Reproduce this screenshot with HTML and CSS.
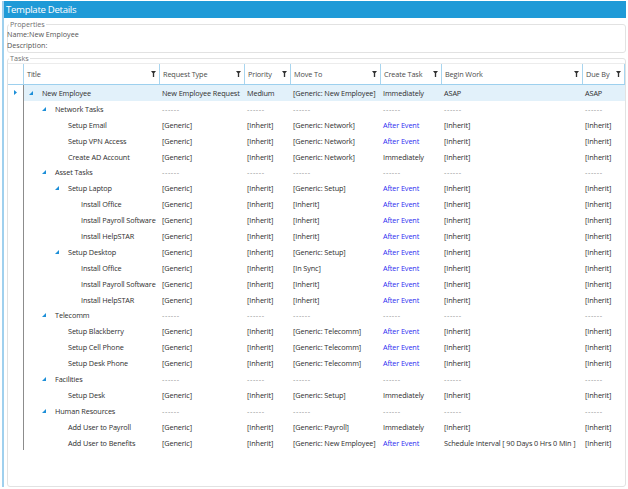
FILE: index.html
```html
<!DOCTYPE html>
<html>
<head>
<meta charset="utf-8">
<link rel="stylesheet" href="styles.css">
</head>
<body>
<div class="window">
  <div class="titlebar">Template Details</div>
  <fieldset class="group props">
    <legend>Properties</legend>
    <div class="prop">Name:New Employee</div>
    <div class="prop">Description:</div>
  </fieldset>
  <fieldset class="group tasks">
    <legend>Tasks</legend>
    <div class="grid">
      <div class="row head">
        <div class="c ind"></div>
        <div class="c h">Title<svg class="flt" viewBox="0 0 6 7"><path d="M0 0H6L3.8 2.6V7H2.2V2.6Z"/></svg></div>
        <div class="c h">Request Type<svg class="flt" viewBox="0 0 6 7"><path d="M0 0H6L3.8 2.6V7H2.2V2.6Z"/></svg></div>
        <div class="c h">Priority<svg class="flt" viewBox="0 0 6 7"><path d="M0 0H6L3.8 2.6V7H2.2V2.6Z"/></svg></div>
        <div class="c h">Move To<svg class="flt" viewBox="0 0 6 7"><path d="M0 0H6L3.8 2.6V7H2.2V2.6Z"/></svg></div>
        <div class="c h">Create Task<svg class="flt" viewBox="0 0 6 7"><path d="M0 0H6L3.8 2.6V7H2.2V2.6Z"/></svg></div>
        <div class="c h">Begin Work<svg class="flt" viewBox="0 0 6 7"><path d="M0 0H6L3.8 2.6V7H2.2V2.6Z"/></svg></div>
        <div class="c h last">Due By<svg class="flt" viewBox="0 0 6 7"><path d="M0 0H6L3.8 2.6V7H2.2V2.6Z"/></svg></div>
      </div>

      <div class="row sel">
        <div class="c ind"><svg class="cur" viewBox="0 0 3 5"><path d="M0 0L3 2.5L0 5Z"/></svg></div>
        <div class="c t l0"><svg class="tg" viewBox="0 0 5 5"><path d="M5 0V5H0Z"/></svg>New Employee</div>
        <div class="c">New Employee Request</div><div class="c">Medium</div><div class="c">[Generic: New Employee]</div><div class="c">Immediately</div><div class="c">ASAP</div><div class="c">ASAP</div>
      </div>

      <div class="row">
        <div class="c ind"></div>
        <div class="c t l1"><svg class="tg" viewBox="0 0 5 5"><path d="M5 0V5H0Z"/></svg>Network Tasks</div>
        <div class="c d">------</div><div class="c d">------</div><div class="c d">------</div><div class="c d">------</div><div class="c d">------</div><div class="c d">------</div>
      </div>
      <div class="row">
        <div class="c ind"></div>
        <div class="c t l2"><span class="sp"></span>Setup Email</div>
        <div class="c">[Generic]</div><div class="c">[Inherit]</div><div class="c">[Generic: Network]</div><div class="c ev">After Event</div><div class="c">[Inherit]</div><div class="c">[Inherit]</div>
      </div>
      <div class="row">
        <div class="c ind"></div>
        <div class="c t l2"><span class="sp"></span>Setup VPN Access</div>
        <div class="c">[Generic]</div><div class="c">[Inherit]</div><div class="c">[Generic: Network]</div><div class="c ev">After Event</div><div class="c">[Inherit]</div><div class="c">[Inherit]</div>
      </div>
      <div class="row">
        <div class="c ind"></div>
        <div class="c t l2"><span class="sp"></span>Create AD Account</div>
        <div class="c">[Generic]</div><div class="c">[Inherit]</div><div class="c">[Generic: Network]</div><div class="c">Immediately</div><div class="c">[Inherit]</div><div class="c">[Inherit]</div>
      </div>

      <div class="row">
        <div class="c ind"></div>
        <div class="c t l1"><svg class="tg" viewBox="0 0 5 5"><path d="M5 0V5H0Z"/></svg>Asset Tasks</div>
        <div class="c d">------</div><div class="c d">------</div><div class="c d">------</div><div class="c d">------</div><div class="c d">------</div><div class="c d">------</div>
      </div>
      <div class="row">
        <div class="c ind"></div>
        <div class="c t l2"><svg class="tg" viewBox="0 0 5 5"><path d="M5 0V5H0Z"/></svg>Setup Laptop</div>
        <div class="c">[Generic]</div><div class="c">[Inherit]</div><div class="c">[Generic: Setup]</div><div class="c ev">After Event</div><div class="c">[Inherit]</div><div class="c">[Inherit]</div>
      </div>
      <div class="row">
        <div class="c ind"></div>
        <div class="c t l3"><span class="sp"></span>Install Office</div>
        <div class="c">[Generic]</div><div class="c">[Inherit]</div><div class="c">[Inherit]</div><div class="c ev">After Event</div><div class="c">[Inherit]</div><div class="c">[Inherit]</div>
      </div>
      <div class="row">
        <div class="c ind"></div>
        <div class="c t l3"><span class="sp"></span>Install Payroll Software</div>
        <div class="c">[Generic]</div><div class="c">[Inherit]</div><div class="c">[Inherit]</div><div class="c ev">After Event</div><div class="c">[Inherit]</div><div class="c">[Inherit]</div>
      </div>
      <div class="row">
        <div class="c ind"></div>
        <div class="c t l3"><span class="sp"></span>Install HelpSTAR</div>
        <div class="c">[Generic]</div><div class="c">[Inherit]</div><div class="c">[Inherit]</div><div class="c ev">After Event</div><div class="c">[Inherit]</div><div class="c">[Inherit]</div>
      </div>
      <div class="row">
        <div class="c ind"></div>
        <div class="c t l2"><svg class="tg" viewBox="0 0 5 5"><path d="M5 0V5H0Z"/></svg>Setup Desktop</div>
        <div class="c">[Generic]</div><div class="c">[Inherit]</div><div class="c">[Generic: Setup]</div><div class="c ev">After Event</div><div class="c">[Inherit]</div><div class="c">[Inherit]</div>
      </div>
      <div class="row">
        <div class="c ind"></div>
        <div class="c t l3"><span class="sp"></span>Install Office</div>
        <div class="c">[Generic]</div><div class="c">[Inherit]</div><div class="c">[In Sync]</div><div class="c ev">After Event</div><div class="c">[Inherit]</div><div class="c">[Inherit]</div>
      </div>
      <div class="row">
        <div class="c ind"></div>
        <div class="c t l3"><span class="sp"></span>Install Payroll Software</div>
        <div class="c">[Generic]</div><div class="c">[Inherit]</div><div class="c">[Inherit]</div><div class="c ev">After Event</div><div class="c">[Inherit]</div><div class="c">[Inherit]</div>
      </div>
      <div class="row">
        <div class="c ind"></div>
        <div class="c t l3"><span class="sp"></span>Install HelpSTAR</div>
        <div class="c">[Generic]</div><div class="c">[Inherit]</div><div class="c">[Inherit]</div><div class="c ev">After Event</div><div class="c">[Inherit]</div><div class="c">[Inherit]</div>
      </div>

      <div class="row">
        <div class="c ind"></div>
        <div class="c t l1"><svg class="tg" viewBox="0 0 5 5"><path d="M5 0V5H0Z"/></svg>Telecomm</div>
        <div class="c d">------</div><div class="c d">------</div><div class="c d">------</div><div class="c d">------</div><div class="c d">------</div><div class="c d">------</div>
      </div>
      <div class="row">
        <div class="c ind"></div>
        <div class="c t l2"><span class="sp"></span>Setup Blackberry</div>
        <div class="c">[Generic]</div><div class="c">[Inherit]</div><div class="c">[Generic: Telecomm]</div><div class="c ev">After Event</div><div class="c">[Inherit]</div><div class="c">[Inherit]</div>
      </div>
      <div class="row">
        <div class="c ind"></div>
        <div class="c t l2"><span class="sp"></span>Setup Cell Phone</div>
        <div class="c">[Generic]</div><div class="c">[Inherit]</div><div class="c">[Generic: Telecomm]</div><div class="c ev">After Event</div><div class="c">[Inherit]</div><div class="c">[Inherit]</div>
      </div>
      <div class="row">
        <div class="c ind"></div>
        <div class="c t l2"><span class="sp"></span>Setup Desk Phone</div>
        <div class="c">[Generic]</div><div class="c">[Inherit]</div><div class="c">[Generic: Telecomm]</div><div class="c ev">After Event</div><div class="c">[Inherit]</div><div class="c">[Inherit]</div>
      </div>

      <div class="row">
        <div class="c ind"></div>
        <div class="c t l1"><svg class="tg" viewBox="0 0 5 5"><path d="M5 0V5H0Z"/></svg>Facilities</div>
        <div class="c d">------</div><div class="c d">------</div><div class="c d">------</div><div class="c d">------</div><div class="c d">------</div><div class="c d">------</div>
      </div>
      <div class="row">
        <div class="c ind"></div>
        <div class="c t l2"><span class="sp"></span>Setup Desk</div>
        <div class="c">[Generic]</div><div class="c">[Inherit]</div><div class="c">[Generic: Setup]</div><div class="c">Immediately</div><div class="c">[Inherit]</div><div class="c">[Inherit]</div>
      </div>

      <div class="row">
        <div class="c ind"></div>
        <div class="c t l1"><svg class="tg" viewBox="0 0 5 5"><path d="M5 0V5H0Z"/></svg>Human Resources</div>
        <div class="c d">------</div><div class="c d">------</div><div class="c d">------</div><div class="c d">------</div><div class="c d">------</div><div class="c d">------</div>
      </div>
      <div class="row">
        <div class="c ind"></div>
        <div class="c t l2"><span class="sp"></span>Add User to Payroll</div>
        <div class="c">[Generic]</div><div class="c">[Inherit]</div><div class="c">[Generic: Payroll]</div><div class="c">Immediately</div><div class="c">[Inherit]</div><div class="c">[Inherit]</div>
      </div>
      <div class="row">
        <div class="c ind"></div>
        <div class="c t l2"><span class="sp"></span>Add User to Benefits</div>
        <div class="c">[Generic]</div><div class="c">[Inherit]</div><div class="c">[Generic: New Employee]</div><div class="c ev">After Event</div><div class="c">Schedule Interval [ 90 Days 0 Hrs 0 Min ]</div><div class="c">[Inherit]</div>
      </div>
    </div>
  </fieldset>
</div>
</body>
</html>
```

FILE: styles.css
```css
* { box-sizing: border-box; }
html, body {
  margin: 0;
  padding: 0;
  background: #ffffff;
}
body {
  width: 628px;
  height: 489px;
  overflow: hidden;
  font-family: "Open Sans", "Noto Sans", sans-serif;
  color: #3c3c3c;
}
.window {
  margin: 1px 2px 0 2px;
  border-left: 2px solid #9fd0ee;
  height: 486px;
  display: flex;
  flex-direction: column;
}
.titlebar {
  background: #1f9ad7;
  color: #ffffff;
  height: 17px;
  line-height: 17px;
  font-size: 9.6px;
  letter-spacing: -0.3px;
  padding-left: 2px;
}
.group {
  margin: 0 0 0 3px;
  padding: 0;
  border: 1px solid #e2e2e2;
  border-radius: 3px;
  min-width: 0;
}
.group legend {
  font-size: 7.2px;
  line-height: 10px;
  color: #6f6f6f;
  padding: 0 1px;
  margin-left: 1px;
}
.props {
  padding: 0 0 1px 0;
  margin-top: 1px;
}
.prop {
  font-size: 7.2px;
  line-height: 11px;
  color: #555555;
  margin-left: -1px;
}
.tasks {
  flex: 1;
  margin-top: 0;
  margin-bottom: 0;
}
.grid {
  font-size: 7.3px;
  letter-spacing: -0.12px;
  color: #2e2e2e;
}
.row {
  display: grid;
  grid-template-columns: 15px 136px 85px 46px 90px 61px 141px 43px;
  height: 15.9px;
  align-items: stretch;
}
.c {
  display: flex;
  align-items: center;
  padding-left: 3px;
  white-space: nowrap;
  overflow: hidden;
}
.row.head {
  height: 22px;
  border-top: 1px solid #ececec;
  border-bottom: 1px solid #9dd0ee;
}
.head .c {
  border-left: 1px solid #a8d5ef;
  color: #4a4a4a;
  justify-content: space-between;
  padding-right: 3px;
}
.head .c.ind { border-left: none; }
.head .c.last { border-right: 1px solid #a8d5ef; }
.flt {
  width: 5px;
  height: 6px;
  fill: #303030;
  flex: none;
}
.c.t {
  border-left: 1px solid #8c8c8c;
  padding-left: 5px;
}
.c.t.l1 { padding-left: 18px; }
.c.t.l2 { padding-left: 31px; }
.c.t.l3 { padding-left: 44px; }
.tg {
  width: 4px;
  height: 4px;
  fill: #1d8fd8;
  flex: none;
  margin-right: 9px;
}
.sp {
  width: 4px;
  flex: none;
  margin-right: 9px;
}
.c.ind {
  padding-left: 6px;
}
.cur {
  width: 3px;
  height: 5px;
  fill: #1d8fd8;
}
.row.sel .c:not(.ind) {
  background: #e2f1fa;
}
.c.d {
  color: #8f8f8f;
  letter-spacing: 0.6px;
}
.c.ev { color: #2d2df0; }
```
